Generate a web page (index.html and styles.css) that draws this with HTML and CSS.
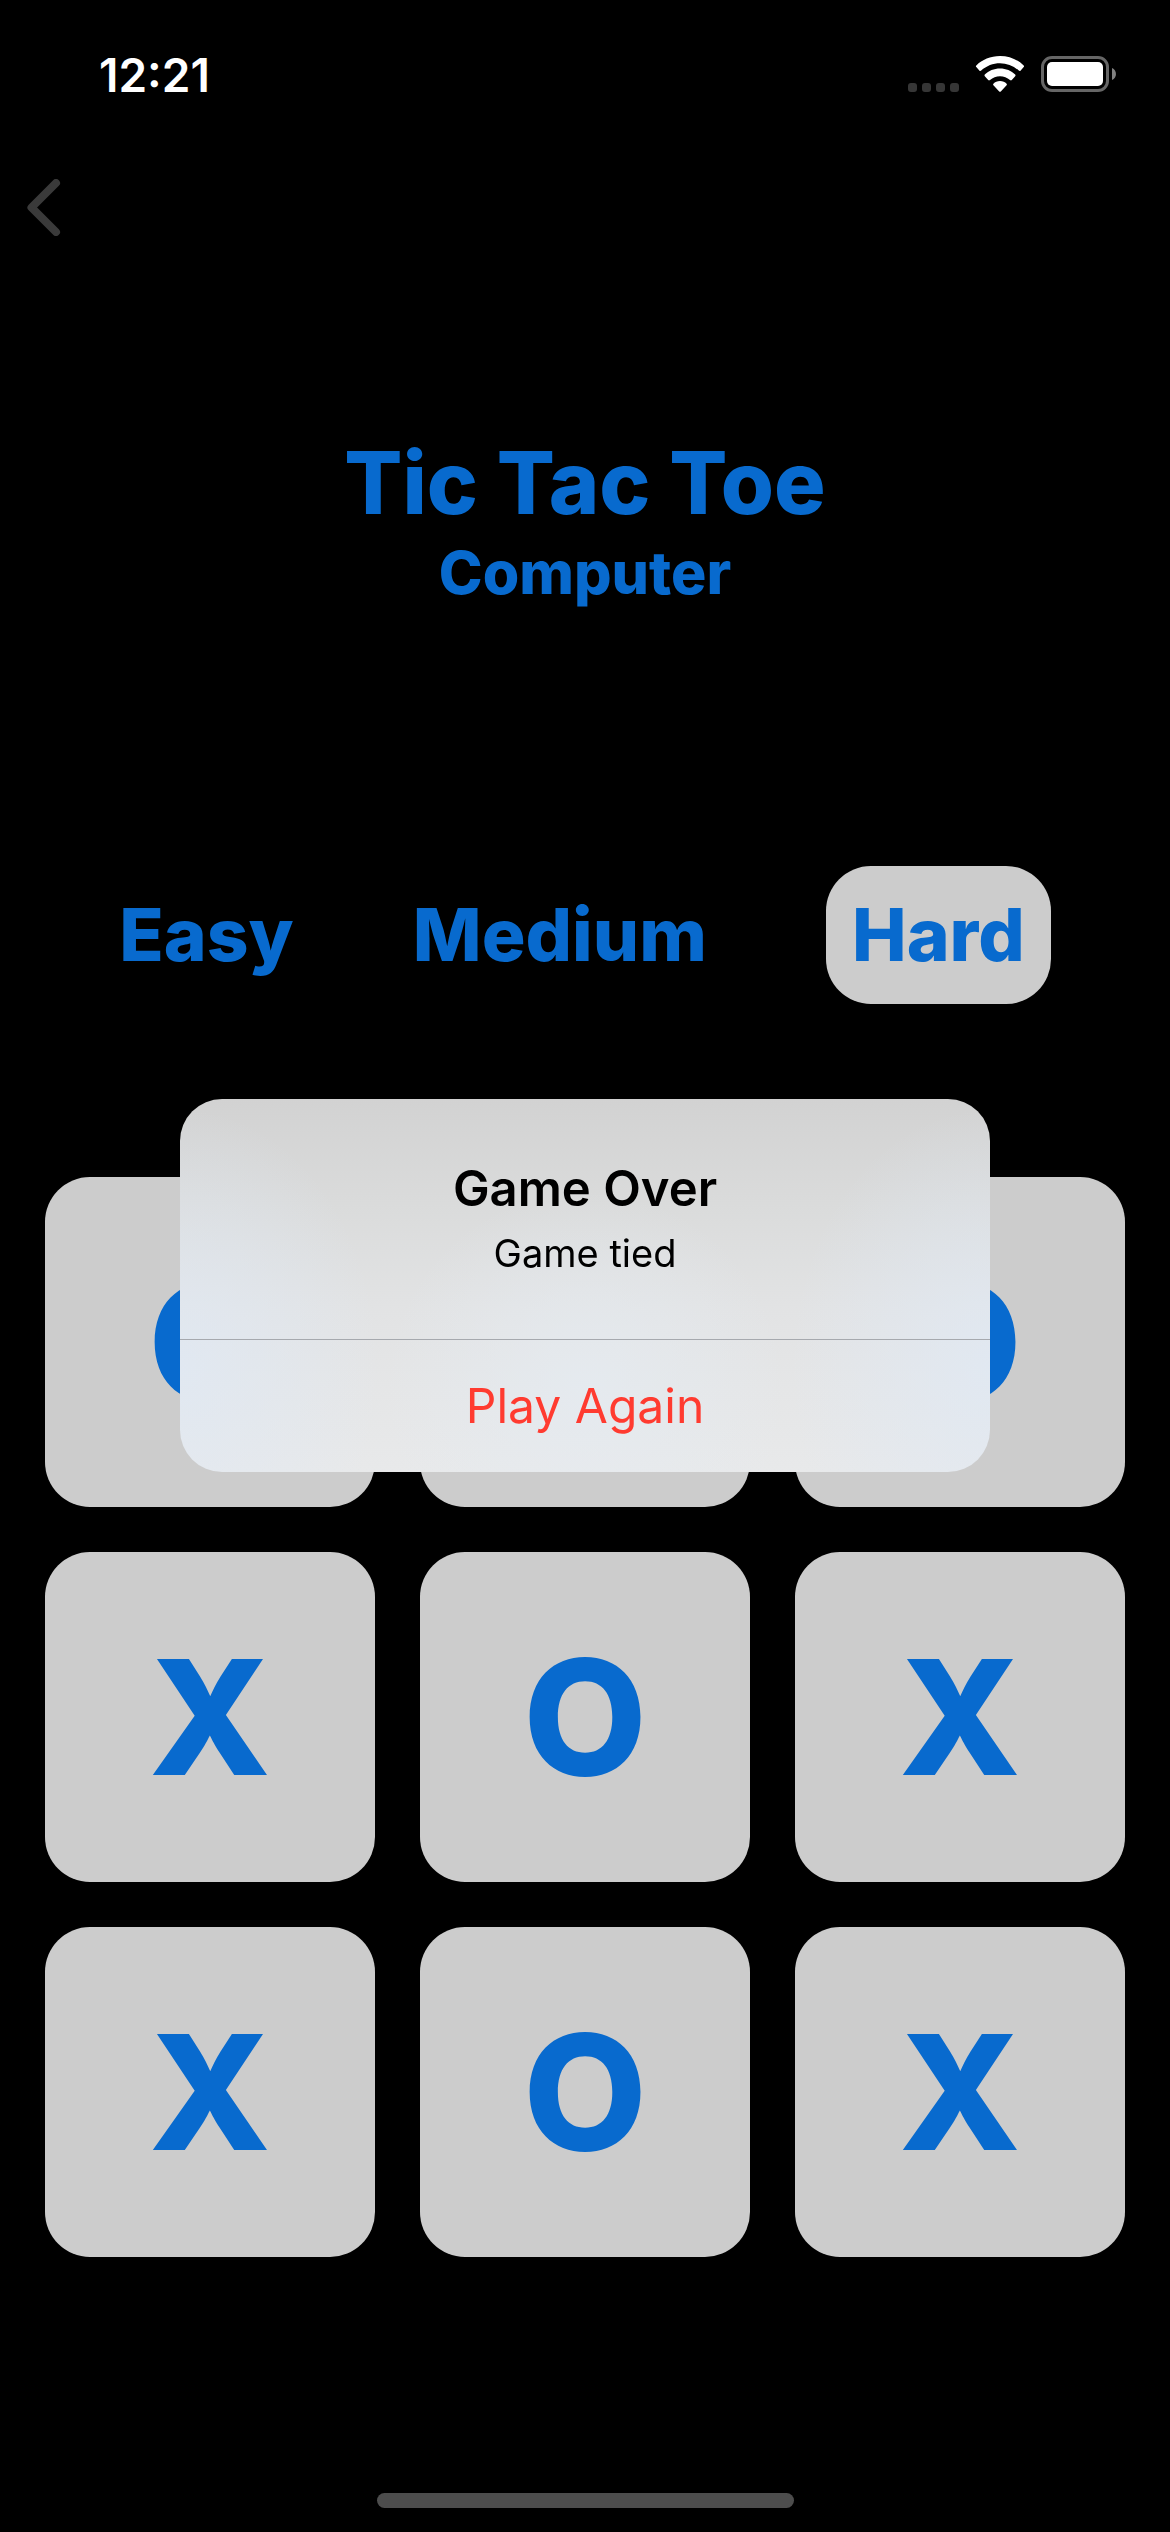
FILE: index.html
```html
<!DOCTYPE html>
<html lang="en">
<head>
  <meta charset="utf-8">
  <meta name="viewport" content="width=device-width, initial-scale=1">
  <title>Tic Tac Toe</title>
  <link rel="stylesheet" href="styles.css">
</head>
<body>
  <div class="screen">
    <header class="status-bar">
      <time class="clock">12:21</time>
      <div class="indicators">
        <svg class="signal" width="51" height="9" viewBox="0 0 51 9" aria-hidden="true">
          <rect width="9" height="9" rx="3"/><rect x="14" width="9" height="9" rx="3"/><rect x="28" width="9" height="9" rx="3"/><rect x="42" width="9" height="9" rx="3"/>
        </svg>
        <svg class="wifi" width="50" height="36" viewBox="0 0 50 36" aria-hidden="true">
          <path d="M25 0C34.5 0 42.800 3.700 48.700 9.400Q49.500 10.200 48.700 11L45.700 14.500Q44.800 15.500 43.800 14.600C38.500 9.800 32 7.300 25 7.300S11.500 9.800 6.200 14.600Q5.200 15.500 4.300 14.500L1.300 11Q.5 10.200 1.300 9.400C7.200 3.700 15.500 0 25 0Z"/>
          <path d="M25 12.500C31 12.500 36.300 14.800 40.200 18.600Q41 19.400 40.200 20.200L36.800 24Q36 24.900 35 24C32.200 21.500 28.800 20.200 25 20.200S17.800 21.500 15 24Q14 24.900 13.200 24L9.800 20.200Q9 19.400 9.800 18.600C13.700 14.800 19 12.500 25 12.500Z"/>
          <path d="M25 25C27.700 25 30 26 31.600 27.700Q32.300 28.500 31.600 29.200L25.800 35.400Q25 36.200 24.200 35.400L18.400 29.200Q17.700 28.500 18.400 27.700C20 26 22.300 25 25 25Z"/>
        </svg>
        <svg class="battery" width="75" height="36" viewBox="0 0 75 36" aria-hidden="true">
          <rect class="battery-case" x="1.500" y="1.500" width="65" height="33" rx="9.500"/>
          <rect class="battery-level" x="6" y="6" width="56" height="24" rx="5"/>
          <path class="battery-tip" d="M71 12C76.300 14 76.300 22 71 24Z"/>
        </svg>
      </div>
    </header>

    <nav class="nav-bar">
      <button class="back" type="button" aria-label="Back">
        <svg width="34" height="57" viewBox="0 0 34 57" aria-hidden="true"><path d="M29 4 4.500 28.500 29 53"/></svg>
      </button>
    </nav>

    <main class="game">
      <h1 class="title">Tic Tac Toe</h1>
      <h2 class="subtitle">Computer</h2>

      <div class="levels" role="group" aria-label="Difficulty">
        <button class="level" type="button">Easy</button>
        <button class="level" type="button">Medium</button>
        <button class="level level-selected" type="button" aria-pressed="true">Hard</button>
      </div>

      <div class="board">
        <button class="cell" type="button">O</button>
        <button class="cell" type="button" aria-label="Top middle"></button>
        <button class="cell" type="button">O</button>
        <button class="cell" type="button">X</button>
        <button class="cell" type="button">O</button>
        <button class="cell" type="button">X</button>
        <button class="cell" type="button">X</button>
        <button class="cell" type="button">O</button>
        <button class="cell" type="button">X</button>
      </div>
    </main>

    <div class="home-indicator"></div>
  </div>

  <div class="overlay">
    <section class="alert" role="alertdialog" aria-labelledby="alert-title" aria-describedby="alert-message">
      <div class="alert-body">
        <h2 class="alert-title" id="alert-title">Game Over</h2>
        <p class="alert-message" id="alert-message">Game tied</p>
      </div>
      <button class="alert-action" type="button">Play Again</button>
    </section>
  </div>
</body>
</html>
```
FILE: styles.css
```css
:root {
  --blue: #086ace;
  --tile: #ccc;
}

* {
  box-sizing: border-box;
}

body {
  margin: 0;
  background: #000;
  font-family: Inter, "Liberation Sans", sans-serif;
}

h1, h2, p {
  margin: 0;
}

button {
  margin: 0;
  padding: 0;
  border: 0;
  background: none;
  font: inherit;
  color: inherit;
}

svg {
  display: block;
}

.screen {
  display: flex;
  flex-direction: column;
  min-height: 100vh;
  padding-bottom: 24px;
}

/* Status bar */
.status-bar {
  display: flex;
  justify-content: space-between;
  align-items: flex-start;
  height: 141px;
  padding: 48px 54px 0 99px;
  color: #fff;
}

.clock {
  font-size: 46px;
  line-height: 54px;
  font-weight: 600;
}

.indicators {
  display: flex;
  align-items: flex-end;
  gap: 16px;
  padding-top: 8px;
}

.signal {
  fill: #363636;
}

.wifi {
  fill: #fff;
}

.battery-case {
  fill: none;
  stroke: #666;
  stroke-width: 3;
}

.battery-level {
  fill: #fff;
}

.battery-tip {
  fill: #808080;
}

/* Navigation */
.nav-bar {
  display: flex;
  align-items: center;
  height: 132px;
  padding: 0 27px;
}

.back path {
  fill: none;
  stroke: #3a3a3a;
  stroke-width: 8;
  stroke-linecap: round;
  stroke-linejoin: round;
}

/* Game */
.game {
  padding: 156px 45px 0;
  color: var(--blue);
  text-align: center;
}

.title {
  font-size: 86px;
  line-height: 108px;
  font-weight: 800;
}

.subtitle {
  font-size: 59px;
  line-height: 72px;
  font-weight: 800;
}

.levels {
  display: flex;
  justify-content: space-evenly;
  margin: 257px -45px 0;
}

.level {
  padding: 24px 0;
  border-radius: 45px;
  font-size: 73px;
  line-height: 90px;
  font-weight: 800;
}

.level-selected {
  padding: 24px 26px;
  background: var(--tile);
}

.board {
  display: grid;
  grid-template-columns: repeat(3, 1fr);
  gap: 45px;
  margin-top: 173px;
}

.cell {
  aspect-ratio: 1;
  border-radius: 45px;
  background: var(--tile);
  font-size: 160px;
  font-weight: 800;
}

.home-indicator {
  width: 417px;
  height: 15px;
  margin: auto auto 0;
  border-radius: 8px;
  background: #4d4d4d;
}

/* Alert, centred between the status bar and the home indicator area */
.overlay {
  position: fixed;
  inset: 141px 0 102px;
  display: flex;
  align-items: center;
  justify-content: center;
}

.alert {
  width: 810px;
  border-radius: 42px;
  overflow: hidden;
  background:
    radial-gradient(200px 260px at 0 72%, rgba(224, 233, 244, .8), rgba(224, 233, 244, 0)),
    radial-gradient(200px 260px at 100% 72%, rgba(224, 233, 244, .8), rgba(224, 233, 244, 0)),
    radial-gradient(200px 200px at 50% 78%, rgba(229, 235, 241, .8), rgba(229, 235, 241, 0)),
    linear-gradient(#d2d2d2, #dadbdb 28%, #e2e3e4 56%, #e8e9ea);
  text-align: center;
}

.alert-body {
  padding: 60px 48px 62px;
  border-bottom: 1px solid #a6a9ae;
}

.alert-title {
  font-size: 49px;
  line-height: 60px;
  font-weight: 600;
  color: #000;
}

.alert-message {
  margin-top: 10px;
  font-size: 38px;
  line-height: 48px;
  color: #000;
}

.alert-action {
  width: 100%;
  height: 132px;
  font-size: 48px;
  line-height: 60px;
  color: #ff3b30;
}
```
